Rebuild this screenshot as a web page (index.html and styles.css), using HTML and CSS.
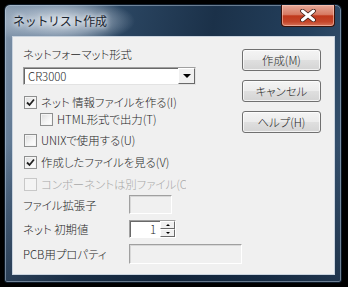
FILE: index.html
```html
<!DOCTYPE html>
<html lang="ja">
<head>
<meta charset="UTF-8">
<title>ネットリスト作成</title>
<link rel="stylesheet" href="styles.css">
</head>
<body>
    <div class="window">
        <!-- Title bar -->
        <div class="titlebar">
            <span class="title">ネットリスト作成</span>
            <div class="close">
                <svg width="18" height="13" viewBox="0 0 18 13">
                    <path d="M3.5 2 L14.5 11 M14.5 2 L3.5 11" stroke="#3a1a14" stroke-width="4.6" stroke-linecap="round"/>
                    <path d="M3.5 2 L14.5 11 M14.5 2 L3.5 11" stroke="#fff" stroke-width="3" stroke-linecap="round"/>
                </svg>
            </div>
        </div>

        <!-- Dialog body -->
        <div class="client">
            <div class="form">
                <div class="label first">ネットフォーマット形式</div>
                <div class="combo">
                    <span class="combo-text">CR3000</span>
                    <span class="drop"><span class="arrow"></span></span>
                </div>

                <div class="check row-net">
                    <span class="box checked"><svg width="9" height="9" viewBox="0 0 9 9"><path d="M1 4.5 L3.5 7 L8 1.5" fill="none" stroke="#222" stroke-width="1.8"/></svg></span>
                    <span class="text">ネット 情報ファイルを作る(I)</span>
                </div>
                <div class="check row-html sub">
                    <span class="box"></span>
                    <span class="text">HTML形式で出力(T)</span>
                </div>
                <div class="check row-unix">
                    <span class="box"></span>
                    <span class="text">UNIXで使用する(U)</span>
                </div>
                <div class="check row-view">
                    <span class="box checked"><svg width="9" height="9" viewBox="0 0 9 9"><path d="M1 4.5 L3.5 7 L8 1.5" fill="none" stroke="#222" stroke-width="1.8"/></svg></span>
                    <span class="text">作成したファイルを見る(V)</span>
                </div>
                <div class="check row-comp disabled">
                    <span class="box"></span>
                    <span class="text">コンポーネントは別ファイル(C)</span>
                </div>

                <div class="field row-ext">
                    <span class="field-label">ファイル拡張子</span>
                    <span class="edit ext off"></span>
                </div>
                <div class="field row-spin">
                    <span class="field-label">ネット 初期値</span>
                    <span class="edit spin">
                        <span class="spin-value">1</span>
                        <span class="spin-btns">
                            <span class="spin-btn"><span class="up"></span></span>
                            <span class="spin-btn"><span class="down"></span></span>
                        </span>
                    </span>
                </div>
                <div class="field row-pcb">
                    <span class="field-label">PCB用プロパティ</span>
                    <span class="edit pcb off"></span>
                </div>
            </div>

            <div class="buttons">
                <div class="btn">作成(M)</div>
                <div class="btn">キャンセル</div>
                <div class="btn">ヘルプ(H)</div>
            </div>
        </div>
    </div>
</body>
</html>
```

FILE: styles.css
```css
body {
    margin: 0;
    background: #000;
    width: 348px;
    height: 287px;
    overflow: hidden;
    font-family: "Noto Sans CJK JP", sans-serif;
    font-size: 11.4px;
    font-weight: 300;
    font-feature-settings: "palt";
    color: #262626;
}
.window {
    margin: 4px 0 0 4px;
    width: 338px;
    height: 279px;
    box-sizing: border-box;
    padding: 0 6px 8px 7px;
    border-radius: 6px 6px 3px 3px;
    border: 1px solid #0d1a28;
    background:
        radial-gradient(ellipse 75px 24px at 55px 16px, rgba(222, 229, 236, 0.95), rgba(190, 202, 216, 0.6) 55%, rgba(150, 168, 188, 0) 100%),
        linear-gradient(to bottom, rgba(0, 0, 0, 0) 0, rgba(0, 0, 0, 0) 50%, rgba(10, 25, 45, 0.55) 100%),
        linear-gradient(100deg, #8598ad 0%, #56708c 10%, #2b4662 30%, #1b3149 55%, #24405d 80%, #3b5672 100%);
    box-shadow: inset 0 0 0 1px rgba(200, 215, 230, 0.45);
}
.titlebar {
    height: 31px;
    display: flex;
    justify-content: space-between;
    align-items: flex-start;
}
.title {
    margin: 7px 0 0 1px;
    font-size: 12px;
    font-weight: 400;
    font-feature-settings: normal;
    color: #1c2530;
    text-shadow: 0 0 4px #e8edf2, 0 0 6px #e8edf2;
    letter-spacing: -0.3px;
}
.close {
    width: 54px;
    height: 22px;
    box-sizing: border-box;
    border: 1px solid #3b1108;
    border-top: none;
    border-radius: 0 0 4px 4px;
    background: linear-gradient(to bottom, #e7a999 0%, #d77a63 45%, #c0381c 52%, #c4462a 80%, #d8745a 100%);
    box-shadow: inset 0 0 0 1px rgba(255, 210, 195, 0.55);
    display: flex;
    align-items: center;
    justify-content: center;
}
.client {
    height: 239px;
    box-sizing: border-box;
    background: #f0f0f0;
    border: 1px solid #c9d3de;
    display: flex;
    justify-content: space-between;
    padding: 0 13px 0 10px;
}
.form {
    display: flex;
    flex-direction: column;
    width: 220px;
}
.label {
    line-height: 16px;
    height: 16px;
    white-space: nowrap;
}
.label.first {
    margin-top: 9px;
}
.combo {
    margin-top: 5px;
    width: 173px;
    height: 18px;
    box-sizing: border-box;
    background: #fff;
    border: 1px solid;
    border-color: #a0a0a0 #e3e3e3 #e3e3e3 #a0a0a0;
    box-shadow: inset 1px 1px 0 #696969;
    display: flex;
    justify-content: space-between;
}
.combo-text {
    padding: 1px 0 0 4px;
    line-height: 14px;
}
.drop {
    width: 17px;
    height: 16px;
    box-sizing: border-box;
    background: #f0f0f0;
    border: 1px solid;
    border-color: #fff #696969 #696969 #fff;
    display: flex;
    align-items: center;
    justify-content: center;
}
.arrow {
    width: 0;
    height: 0;
    border-left: 4px solid transparent;
    border-right: 4px solid transparent;
    border-top: 4px solid #000;
}
.check {
    display: flex;
    align-items: center;
    height: 16px;
    width: 158px;
    overflow: hidden;
    white-space: nowrap;
}
.check .box {
    flex: none;
    width: 13px;
    height: 13px;
    box-sizing: border-box;
    margin: 0 4px 0 1px;
    border: 1px solid #8e8f8f;
    background: linear-gradient(135deg, #dcdcdc 0%, #f6f6f6 60%, #fff 100%);
    box-shadow: inset 0 0 0 1px #f4f4f4;
    display: flex;
    align-items: center;
    justify-content: center;
}
.check.sub {
    margin-left: 16px;
    width: 142px;
}
.row-net { margin-top: 9px; }
.row-html { margin-top: 1px; }
.row-unix { margin-top: 5px; }
.row-view { margin-top: 6px; }
.row-comp { margin-top: 6px; }
.check.disabled {
    color: #a8a8a8;
    width: 163px;
}
.check.disabled .box {
    border-color: #c8c8c8;
    background: #f4f4f4;
    box-shadow: none;
}
.field {
    display: flex;
    align-items: center;
}
.field-label {
    width: 106px;
    white-space: nowrap;
    line-height: 16px;
}
.row-ext { margin-top: 3px; }
.row-spin { margin-top: 6px; }
.row-pcb { margin-top: 6px; }
.edit {
    box-sizing: border-box;
    border: 1px solid;
    border-color: #a0a0a0 #fff #fff #a0a0a0;
    box-shadow: inset 1px 1px 0 #d8d8d8;
}
.edit.off {
    background: #f0f0f0;
}
.ext {
    width: 43px;
    height: 19px;
}
.pcb {
    width: 113px;
    height: 20px;
}
.spin {
    width: 47px;
    height: 18px;
    background: #fff;
    box-shadow: inset 1px 1px 0 #696969;
    display: flex;
    justify-content: flex-end;
}
.spin-value {
    padding: 0 4px 0 0;
    line-height: 16px;
}
.spin-btns {
    width: 15px;
    display: flex;
    flex-direction: column;
}
.spin-btn {
    flex: 1;
    box-sizing: border-box;
    background: #f0f0f0;
    border: 1px solid;
    border-color: #fff #696969 #696969 #fff;
    display: flex;
    align-items: center;
    justify-content: center;
}
.up, .down {
    width: 0;
    height: 0;
    border-left: 2px solid transparent;
    border-right: 2px solid transparent;
}
.up { border-bottom: 2px solid #000; }
.down { border-top: 2px solid #000; }
.buttons {
    display: flex;
    flex-direction: column;
    gap: 9px;
    padding-top: 12px;
}
.btn {
    width: 79px;
    height: 22px;
    box-sizing: border-box;
    border: 1px solid #707070;
    border-radius: 3px;
    background: linear-gradient(to bottom, #f4f4f4 0%, #ececec 48%, #dfdfdf 52%, #d4d4d4 100%);
    box-shadow: inset 0 0 0 1px rgba(255, 255, 255, 0.7);
    text-align: center;
    line-height: 20px;
}
```
